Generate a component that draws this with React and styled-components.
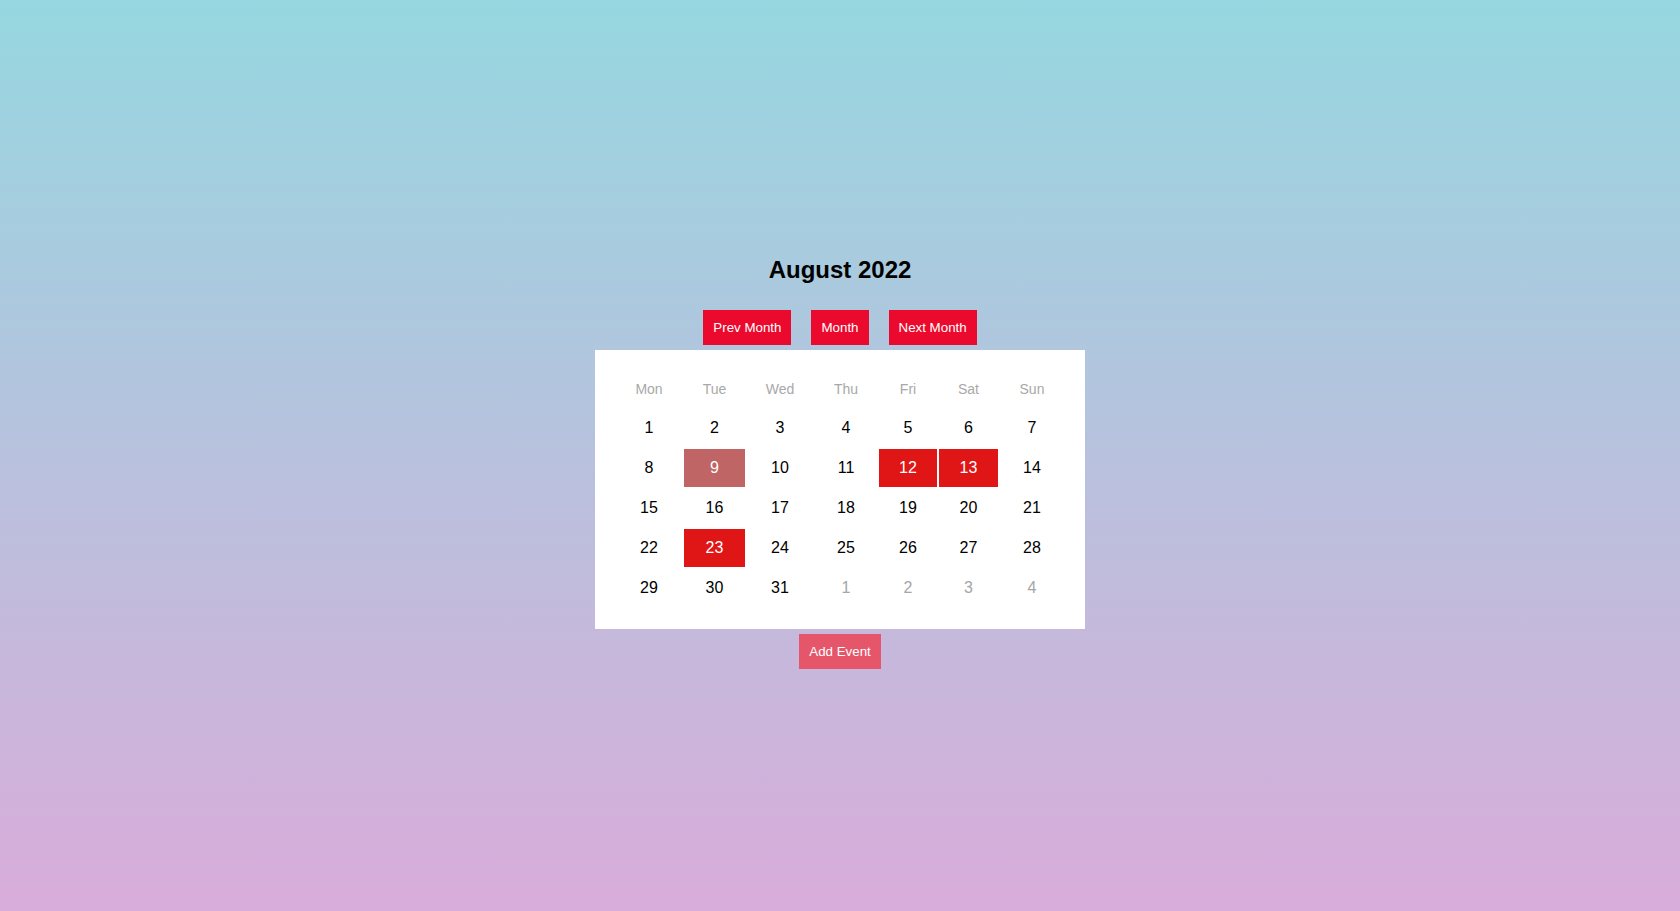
import React from "react";
import styled, { createGlobalStyle } from "styled-components";

const GlobalStyle = createGlobalStyle`
  html, body {
    margin: 0;
    padding: 0;
  }
  body {
    min-height: 100vh;
    background: linear-gradient(180deg, #96d7e0 0%, #d9acda 100%);
    font-family: "Liberation Sans", Arial, sans-serif;
  }
`;

const Page = styled.div`
  min-height: 911px;
  display: flex;
  flex-direction: column;
  align-items: center;
  padding-top: 256px;
  box-sizing: border-box;
`;

const Title = styled.h2`
  margin: 0 0 26px;
  font-size: 24px;
  font-weight: bold;
  line-height: normal;
  color: #000;
`;

const Toolbar = styled.div`
  display: flex;
  gap: 20px;
  margin-bottom: 5px;
`;

const Button = styled.button`
  border: 0;
  margin: 0;
  padding: 10px;
  font-family: "Liberation Sans", Arial, sans-serif;
  font-size: 13.333px;
  line-height: normal;
  color: #fff;
  background: ${(p) => (p.$soft ? "#e5566b" : "#eb0a2d")};
  cursor: pointer;
`;

const Card = styled.div`
  width: 490px;
  box-sizing: border-box;
  background: #fff;
  padding: 21px 21px 22px;
  margin-bottom: 5px;
`;

const Grid = styled.div`
  display: grid;
  grid-template-columns: 66px 61px 66px 62px 58px 59px 64px;
  grid-template-rows: 36px repeat(5, 38px);
  gap: 2px;
`;

const HeadCell = styled.div`
  display: flex;
  align-items: center;
  justify-content: center;
  font-size: 14px;
  color: #a8a8a8;
`;

const DayCell = styled.div`
  display: flex;
  align-items: center;
  justify-content: center;
  font-size: 16px;
  color: ${(p) =>
    p.$kind === "event" || p.$kind === "selected"
      ? "#fff"
      : p.$kind === "muted"
      ? "#a6a6a6"
      : "#000"};
  background: ${(p) =>
    p.$kind === "event"
      ? "#e01515"
      : p.$kind === "selected"
      ? "#c06565"
      : "transparent"};
`;

const heads = ["Mon", "Tue", "Wed", "Thu", "Fri", "Sat", "Sun"];

const days = [];
for (let d = 1; d <= 31; d++) {
  let kind = "normal";
  if (d === 9) kind = "selected";
  if (d === 12 || d === 13 || d === 23) kind = "event";
  days.push({ label: d, kind });
}
for (let d = 1; d <= 4; d++) days.push({ label: d, kind: "muted" });

export default function App() {
  return (
    <>
      <GlobalStyle />
      <Page>
        <Title>August 2022</Title>
        <Toolbar>
          <Button>Prev Month</Button>
          <Button>Month</Button>
          <Button>Next Month</Button>
        </Toolbar>
        <Card>
          <Grid>
            {heads.map((h) => (
              <HeadCell key={h}>{h}</HeadCell>
            ))}
            {days.map((d, i) => (
              <DayCell key={i} $kind={d.kind}>
                {d.label}
              </DayCell>
            ))}
          </Grid>
        </Card>
        <Button $soft>Add Event</Button>
      </Page>
    </>
  );
}
